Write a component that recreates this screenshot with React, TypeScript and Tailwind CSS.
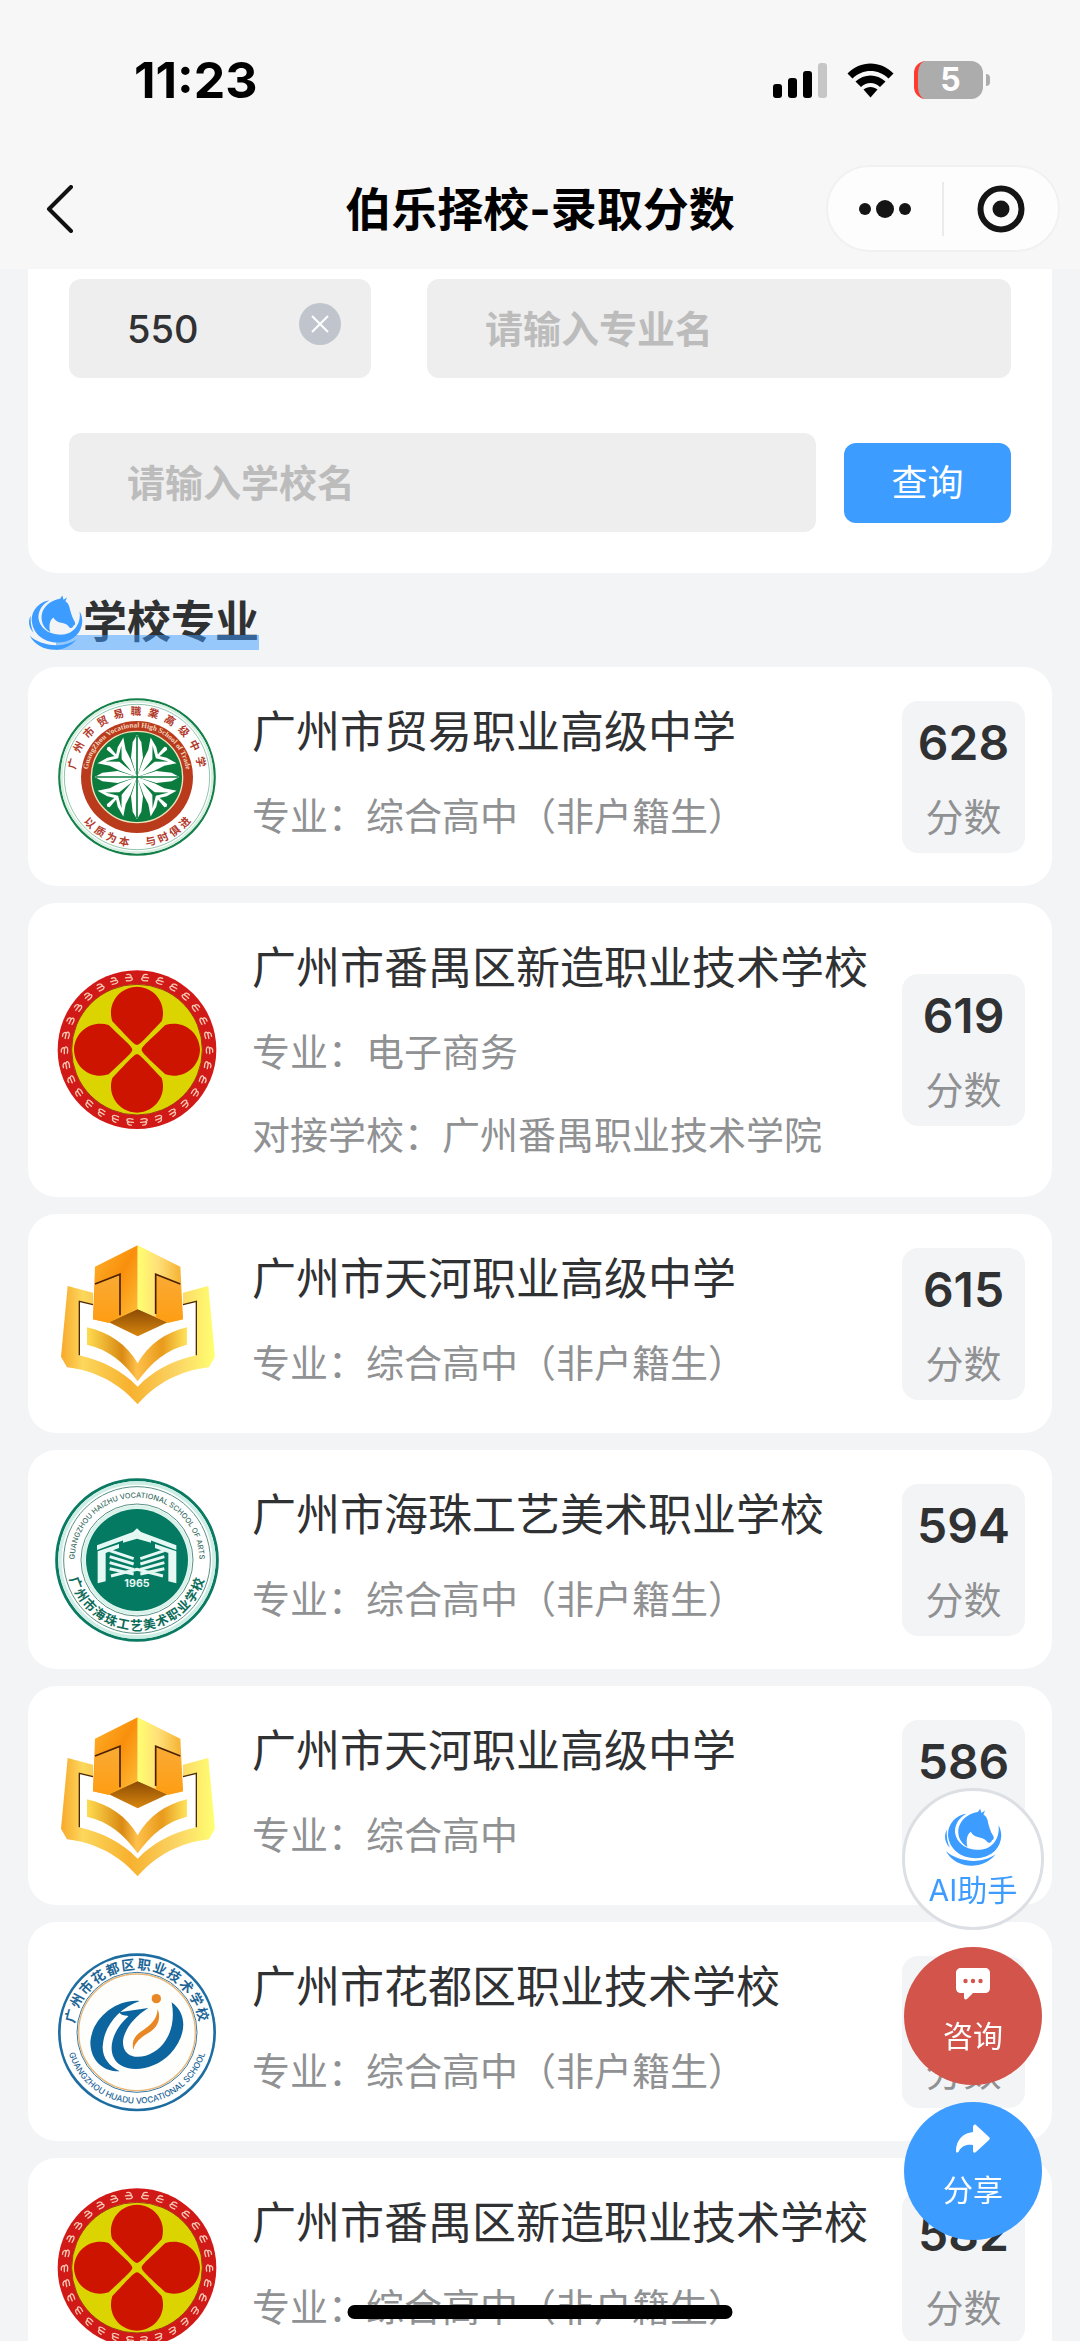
import { useState } from 'react';
import type { ReactNode } from 'react';

type LogoName = 'trade' | 'panyu' | 'tianhe' | 'haizhu' | 'huadu';

interface School {
  name: string;
  major: string;
  partner?: string;
  score: number;
  logo: LogoName;
}

const SCHOOLS: School[] = [
  { name: '广州市贸易职业高级中学', major: '综合高中（非户籍生）', score: 628, logo: 'trade' },
  {
    name: '广州市番禺区新造职业技术学校',
    major: '电子商务',
    partner: '广州番禺职业技术学院',
    score: 619,
    logo: 'panyu',
  },
  { name: '广州市天河职业高级中学', major: '综合高中（非户籍生）', score: 615, logo: 'tianhe' },
  { name: '广州市海珠工艺美术职业学校', major: '综合高中（非户籍生）', score: 594, logo: 'haizhu' },
  { name: '广州市天河职业高级中学', major: '综合高中', score: 586, logo: 'tianhe' },
  { name: '广州市花都区职业技术学校', major: '综合高中（非户籍生）', score: 584, logo: 'huadu' },
  { name: '广州市番禺区新造职业技术学校', major: '综合高中（非户籍生）', score: 582, logo: 'panyu' },
];

function HorseLogo({ className }: { className?: string }) {
  return (
    <svg viewBox="26 28 178 178" className={className} fill="#3c9cff" aria-hidden="true">
      <path d="M95 46C60 50 34 82 39 117C45 158 82 182 122 182C160 182 192 162 200 126C204 108 200 92 193 81C196 98 192 116 183 130C170 150 148 158 124 156C92 154 64 134 60 104C58 80 72 58 95 46Z" />
      <path d="M137 30L130 40C100 44 74 66 70 94C68 118 78 136 98 148C93 128 96 110 108 101C114 112 126 118 138 119C150 121 154 126 160 133C166 137 172 134 173 127C180 126 180 118 176 112C168 100 166 88 162 76C160 62 156 54 147 48L152 36L141 43Z" />
      <path d="M35 95C25 112 28 134 44 150C36 132 33 114 35 95Z" />
      <path d="M32 160C60 188 132 206 184 171C140 224 58 212 32 160Z" />
    </svg>
  );
}

function TradeLogo() {
  return (
    <svg viewBox="1 13 492 492" className="size-full" aria-hidden="true">
      <defs>
        <path id="trade-top" d="M62 259A185 185 0 0 1 432 259" />
        <path id="trade-ring" d="M98 259A149 149 0 0 1 396 259" />
        <path id="trade-bottom" d="M38 259A209 209 0 0 0 456 259" />
      </defs>
      <circle cx="247" cy="259" r="233" fill="#fff" stroke="#15804a" strokeWidth="7" />
      <circle cx="247" cy="259" r="226" fill="none" stroke="#d5efe0" strokeWidth="7" />
      <circle cx="247" cy="259" r="218" fill="none" stroke="#5da882" strokeWidth="2" />
      <circle cx="247" cy="259" r="168" fill="#b93b1c" />
      <circle cx="247" cy="259" r="137" fill="#0b7c3e" stroke="#f0e3bd" strokeWidth="4" />
      <g transform="translate(247 259)">
        {[0, 90, 180, 270].map((a) => (
          <g key={a} transform={`rotate(${a})`}>
            <path d="M0 0L-18 -58L-13 -104L0 -127L13 -104L18 -58Z" fill="#fff" />
            <g transform="rotate(45)">
              <path d="M0 0L-24 -52L-34 -82L-55 -113L-22 -104L0 -90L22 -104L55 -113L34 -82L24 -52Z" fill="#fff" />
              <path d="M-6 -122L0 -126L6 -122L3 -86H-3Z" fill="#fff" />
              <path d="M0 -22L-5 -70L-34 -100L0 -80L34 -100L5 -70Z" fill="#0b7c3e" />
            </g>
            <path d="M0 0V-124" stroke="#0b7c3e" strokeWidth="5" />
          </g>
        ))}
      </g>
      <g fill="#b23a2b" fontFamily='"Noto Sans CJK SC", sans-serif' fontWeight="700" fontSize="32" textAnchor="middle">
        <text letterSpacing="18">
          <textPath href="#trade-top" startOffset="51%">广州市贸易職業高级中学</textPath>
        </text>
        <text letterSpacing="10">
          <textPath href="#trade-bottom" startOffset="51%">以质为本　与时俱进</textPath>
        </text>
      </g>
      <text fill="#f3d9c0" fontFamily='"Liberation Serif", serif' fontWeight="700" fontSize="22" textAnchor="middle">
        <textPath href="#trade-ring" startOffset="50%">GuangZhou Vocational High School of Trade</textPath>
      </text>
    </svg>
  );
}

function PanyuLogo() {
  const marks = Array.from({ length: 30 }, (_, i) => i * 12 + 6);
  return (
    <svg viewBox="44 54 492 492" className="size-full" aria-hidden="true">
      <circle cx="290" cy="299" r="238" fill="#d11a17" />
      <circle cx="290" cy="299" r="196" fill="#dcd400" stroke="#a8341a" strokeWidth="3" />
      {[0, 90, 180, 270].map((a) => (
        <path
          key={a}
          transform={`rotate(${a} 290 299)`}
          d="M290 285C280 284 268 268 216 214C200 166 232 112 290 110C348 112 380 166 364 214C312 268 300 284 290 285Z"
          fill="#cc1400"
        />
      ))}
      <g fill="none" stroke="#f7c9b4" strokeWidth="4" strokeLinecap="round">
        {marks.map((a) => (
          <path
            key={a}
            transform={`rotate(${a} 290 299)`}
            d={a < 180 ? 'M297 72C286 70 282 78 286 82C278 84 280 94 300 90M286 81H302' : 'M283 72C294 70 298 78 294 82C302 84 300 94 280 90M294 81H278'}
          />
        ))}
      </g>
    </svg>
  );
}

function TianheLogo() {
  return (
    <svg viewBox="46 34 492 492" className="size-full" aria-hidden="true">
      <defs>
        <linearGradient id="th-left" x1="0" y1="0" x2="1" y2="1">
          <stop offset="0" stopColor="#ffb52e" />
          <stop offset="0.5" stopColor="#f98f0c" />
          <stop offset="1" stopColor="#ffc23a" />
        </linearGradient>
        <linearGradient id="th-right" x1="0" y1="0" x2="1" y2="0">
          <stop offset="0" stopColor="#ffff6e" />
          <stop offset="0.45" stopColor="#ffe079" />
          <stop offset="1" stopColor="#f5ae2c" />
        </linearGradient>
        <linearGradient id="th-face" x1="0" y1="0" x2="0" y2="1">
          <stop offset="0" stopColor="#f9ab35" />
          <stop offset="1" stopColor="#ff9d13" />
        </linearGradient>
        <linearGradient id="th-base" x1="0" y1="0" x2="0" y2="1">
          <stop offset="0" stopColor="#8a4a05" />
          <stop offset="1" stopColor="#d8860d" />
        </linearGradient>
        <linearGradient id="th-book" x1="0" y1="0" x2="1" y2="0">
          <stop offset="0" stopColor="#f8a92b" />
          <stop offset="0.14" stopColor="#fcd75c" />
          <stop offset="0.45" stopColor="#f7b12f" />
          <stop offset="0.75" stopColor="#fbd464" />
          <stop offset="1" stopColor="#ffff72" />
        </linearGradient>
        <linearGradient id="th-page" x1="0" y1="0" x2="1" y2="0">
          <stop offset="0" stopColor="#ffdc50" />
          <stop offset="0.35" stopColor="#d98a14" />
          <stop offset="0.5" stopColor="#ffc14a" />
          <stop offset="0.75" stopColor="#e89a1c" />
          <stop offset="1" stopColor="#ffe45c" />
        </linearGradient>
      </defs>
      <path
        d="M84 166L160 186V222L118 212V374C190 390 246 420 294 468C342 420 396 390 470 374V212L430 222V186L506 166L526 378L508 410C420 420 350 458 294 521C238 458 168 420 82 410L64 378Z"
        fill="url(#th-book)"
      />
      <path d="M160 222L119 212V374M430 222L470 212V374" fill="none" stroke="#4e2704" strokeWidth="4" />
      <path d="M142 290C210 306 262 342 294 398C326 342 376 306 442 290V342C382 356 334 396 294 452C254 396 206 356 142 342Z" fill="url(#th-page)" />
      <path d="M206 274L294 234L386 274L294 317Z" fill="url(#th-base)" />
      <path d="M294 44L166 108L160 266L206 276L294 236Z" fill="url(#th-left)" />
      <path d="M294 44L422 108L430 266L386 276L294 236Z" fill="url(#th-right)" />
      <path d="M166 160L241 131V254L206 276L160 266Z" fill="url(#th-face)" />
      <path d="M422 160L348 131V260L386 276L430 266Z" fill="url(#th-face)" />
      <path d="M166 160L241 131V254M422 160L348 131V250" fill="none" stroke="#4a2202" strokeWidth="5" />
    </svg>
  );
}

function HaizhuLogo() {
  return (
    <svg viewBox="46 52 492 492" className="size-full" aria-hidden="true">
      <defs>
        <path id="hz-top" d="M105 298A187 187 0 0 1 479 298" />
        <path id="hz-bottom" d="M82 298A210 210 0 0 0 502 298" />
      </defs>
      <circle cx="292" cy="298" r="241" fill="#fff" stroke="#0b7a63" strokeWidth="9" />
      <circle cx="292" cy="298" r="231" fill="none" stroke="#cdeee4" strokeWidth="10" />
      <circle cx="292" cy="298" r="220" fill="none" stroke="#5a8f84" strokeWidth="3" />
      <circle cx="292" cy="298" r="168" fill="none" stroke="#5a8f84" strokeWidth="3" />
      <circle cx="292" cy="298" r="159" fill="none" stroke="#d9f3eb" strokeWidth="10" />
      <circle cx="292" cy="298" r="153" fill="#047a63" />
      <g fill="#e6f8f3">
        <path d="M172 254L280 214L292 203L304 214L410 254V268L292 224L172 268Z" />
        <path d="M250 236L292 222L334 236V246L292 234L250 246Z" />
        <path d="M174 272L238 250V262L198 277V362L174 368Z" />
        <path d="M410 272L346 250V262L386 277V362L410 368Z" />
      </g>
      <g fill="none" stroke="#e6f8f3" strokeWidth="9">
        <path d="M210 270L282 294M210 288L282 310M210 306L282 326M210 324L282 340" />
        <path d="M374 270L302 294M374 288L302 310M374 306L302 326M374 324L302 340" />
        <path d="M214 346L292 326L370 346" />
      </g>
      <text x="292" y="379" fill="#e6f8f3" fontFamily="Inter, sans-serif" fontWeight="700" fontSize="32" textAnchor="middle">
        1965
      </text>
      <g fill="#3d6f66" textAnchor="middle">
        <text fontFamily="Inter, sans-serif" fontWeight="500" fontSize="22">
          <textPath href="#hz-top" startOffset="50%">GUANGZHOU HAIZHU VOCATIONAL SCHOOL OF ARTS</textPath>
        </text>
        <text fill="#0b6b58" fontFamily='"Noto Sans CJK SC", sans-serif' fontWeight="700" fontSize="38" letterSpacing="4">
          <textPath href="#hz-bottom" startOffset="50%">广州市海珠工艺美术职业学校</textPath>
        </text>
      </g>
    </svg>
  );
}

function HuaduLogo() {
  return (
    <svg viewBox="46 59 492 492" className="size-full" aria-hidden="true">
      <defs>
        <path id="hd-top" d="M103 306A189 189 0 0 1 481 306" />
        <path id="hd-bottom" d="M78 306A214 214 0 0 0 506 306" />
      </defs>
      <circle cx="292" cy="306" r="233" fill="#fff" stroke="#1d6da1" strokeWidth="8" />
      <circle cx="292" cy="306" r="180" fill="#fff" stroke="#3878a4" strokeWidth="3" />
      <circle cx="292" cy="306" r="175" fill="#fefefc" stroke="#e8b777" strokeWidth="4" />
      <path
        d="M300 212C228 206 158 264 152 334C152 392 192 424 240 423C206 408 184 376 190 340C196 284 240 232 300 212Z"
        fill="#0c659f"
      />
      <path
        d="M238 246L326 233C284 258 254 298 250 332C248 374 282 386 318 376C372 360 412 300 396 216C446 252 440 318 392 370C350 414 282 428 242 404C198 374 212 306 266 258C258 254 248 258 238 246Z"
        fill="#0c659f"
      />
      <path d="M354 236C366 268 352 292 326 308C302 322 286 336 281 358C274 328 290 312 312 298C338 280 352 264 354 236Z" fill="#e88724" />
      <circle cx="350" cy="205" r="14" fill="#e88724" />
      <g fill="#1d6596" textAnchor="middle">
        <text fontFamily='"Noto Sans CJK SC", sans-serif' fontWeight="700" fontSize="40" letterSpacing="5">
          <textPath href="#hd-top" startOffset="50%">广州市花都区职业技术学校</textPath>
        </text>
        <text fontFamily="Inter, sans-serif" fontWeight="500" fontSize="25">
          <textPath href="#hd-bottom" startOffset="50%">GUANGZHOU HUADU VOCATIONAL SCHOOL</textPath>
        </text>
      </g>
    </svg>
  );
}

const LOGOS: Record<LogoName, () => ReactNode> = {
  trade: TradeLogo,
  panyu: PanyuLogo,
  tianhe: TianheLogo,
  haizhu: HaizhuLogo,
  huadu: HuaduLogo,
};

function StatusBar() {
  return (
    <div className="flex h-[160px] items-center justify-between pr-[90px] pl-[134px] text-black">
      <span className="text-[50px] font-bold">11:23</span>
      <div className="flex items-center gap-5">
        <svg viewBox="0 0 54 35" className="h-[35px] w-[54px]" aria-hidden="true">
          <rect x="0" y="21" width="9" height="14" rx="3" />
          <rect x="15" y="15" width="9" height="20" rx="3" />
          <rect x="30" y="8" width="9" height="27" rx="3" />
          <rect x="45" y="0" width="9" height="35" rx="3" fill="#c6c6c6" />
        </svg>
        <svg viewBox="0 0 47 35" className="h-[35px] w-[47px]" aria-hidden="true">
          <path d="M0.500 10.500C13 -3 34 -3 46.500 10.500L41.500 15.500C31.500 5.500 15.500 5.500 5.500 15.500Z" />
          <path d="M8.500 18.500C17 10.500 30 10.500 38.500 18.500L33 24C27.500 18.500 19.500 18.500 14 24Z" />
          <path d="M16.500 26.500C20.500 23 26.500 23 30.500 26.500L23.500 34.500Z" />
        </svg>
        <div className="flex items-center gap-[3px]">
          <div className="flex h-[38px] w-[69px] items-center justify-center overflow-hidden rounded-xl border-l-4 border-[#ff3b30] bg-[#acacac] text-[32px] leading-none font-bold text-white">
            5
          </div>
          <div className="h-3 w-1 rounded-r-full bg-[#acacac]" />
        </div>
      </div>
    </div>
  );
}

function NavBar() {
  return (
    <div className="grid h-[109px] grid-cols-[1fr_auto_1fr] items-center pr-5 pb-3 pl-10">
      <button type="button" aria-label="返回" className="justify-self-start">
        <svg viewBox="0 0 40 48" className="h-12 w-10" fill="none" stroke="#111" strokeWidth="4" aria-hidden="true">
          <path d="M31 2L9 24L31 46" strokeLinecap="round" strokeLinejoin="round" />
        </svg>
      </button>
      <h1 className="-ml-5 text-[46px] leading-none font-bold text-black">伯乐择校-录取分数</h1>
      <div className="flex h-[87px] w-[234px] items-center justify-self-end rounded-full border-2 border-[#f1f1f1] bg-[#fdfdfd]">
        <button type="button" aria-label="更多" className="flex h-full flex-1 items-center justify-center">
          <svg viewBox="0 0 52 18" className="h-[18px] w-[52px]" fill="#151515" aria-hidden="true">
            <circle cx="6" cy="9" r="6" />
            <circle cx="26" cy="9" r="9" />
            <circle cx="46" cy="9" r="6" />
          </svg>
        </button>
        <div className="h-[54px] w-[2px] bg-[#ebebeb]" />
        <button type="button" aria-label="关闭" className="flex h-full flex-1 items-center justify-center">
          <svg viewBox="0 0 48 48" className="size-12" aria-hidden="true">
            <circle cx="24" cy="24" r="20.500" fill="none" stroke="#151515" strokeWidth="6" />
            <circle cx="24" cy="24" r="8.500" fill="#151515" />
          </svg>
        </button>
      </div>
    </div>
  );
}

const inputClass =
  'h-[99px] w-full rounded-xl bg-[#eeeeee] px-[58px] text-[38px] font-medium text-[#303133] placeholder:font-bold placeholder:text-[#bcbcbc] outline-none';

function SearchForm() {
  const [score, setScore] = useState('550');
  return (
    <form
      className="rounded-b-[28px] bg-white px-[41px] pt-[10px] pb-[41px]"
      onSubmit={(e) => e.preventDefault()}
    >
      <div className="flex gap-14">
        <div className="relative w-[302px] shrink-0">
          <input aria-label="分数" className={inputClass} value={score} onChange={(e) => setScore(e.target.value)} />
          <button
            type="button"
            aria-label="清除"
            onClick={() => setScore('')}
            className="absolute top-6 right-[30px] flex size-[42px] items-center justify-center rounded-full bg-[#c0c4cc]"
          >
            <svg viewBox="0 0 18 18" className="size-[18px]" stroke="#fff" strokeWidth="2" aria-hidden="true">
              <path d="M1 1L17 17M17 1L1 17" />
            </svg>
          </button>
        </div>
        <input aria-label="专业名" className={inputClass} placeholder="请输入专业名" />
      </div>
      <div className="mt-[55px] flex items-center gap-7">
        <input aria-label="学校名" className={inputClass} placeholder="请输入学校名" />
        <button type="submit" className="h-20 w-[167px] shrink-0 rounded-xl bg-[#3c9cff] text-[36px] text-white">
          查询
        </button>
      </div>
    </form>
  );
}

function SchoolCard({ school }: { school: School }) {
  const Logo = LOGOS[school.logo];
  return (
    <li className="flex min-h-[219px] shrink-0 items-center rounded-[28px] bg-white py-[21px] pr-[27px] pl-[27px]">
      <div className="size-[164px] shrink-0">
        <Logo />
      </div>
      <div className="ml-[33px] min-w-0 flex-1 self-start pt-[2px] whitespace-nowrap">
        <h3 className="text-[44px] leading-[84px] text-[#303133]">{school.name}</h3>
        <p className="text-[38px] leading-[84px] text-[#909193]">专业：{school.major}</p>
        {school.partner && (
          <p className="text-[38px] leading-[82px] text-[#909193]">对接学校：{school.partner}</p>
        )}
      </div>
      <div className="w-[123px] shrink-0 rounded-2xl bg-[#f3f4f6] pt-1 text-center">
        <div className="text-[48px] leading-[76px] font-semibold text-[#303133]">{school.score}</div>
        <div className="text-[38px] leading-[72px] text-[#909193]">分数</div>
      </div>
    </li>
  );
}

function FloatingActions() {
  return (
    <div className="fixed right-9 bottom-[101px] flex flex-col items-center gap-[17px] text-[30px] leading-10">
      <button
        type="button"
        className="flex size-[142px] flex-col items-center justify-center gap-1 rounded-full border-[3px] border-[#dcdfe3] bg-white text-[#3c9cff]"
      >
        <HorseLogo className="size-[58px]" />
        AI助手
      </button>
      <button
        type="button"
        className="flex size-[138px] flex-col items-center justify-center gap-4 rounded-full bg-[#d3544b] pb-2 text-white"
      >
        <svg viewBox="0 0 34 32" className="h-8 w-[34px]" aria-hidden="true">
          <path
            d="M5 0H29C32 0 34 2 34 5V20C34 23 32 25 29 25H17L11 31C9 32 8 31 8 29V25H5C2 25 0 23 0 20V5C0 2 2 0 5 0Z"
            fill="#fff"
          />
          <g fill="#d3544b">
            <circle cx="9.500" cy="13" r="2.200" />
            <circle cx="17" cy="13" r="2.200" />
            <circle cx="24.500" cy="13" r="2.200" />
          </g>
        </svg>
        咨询
      </button>
      <button
        type="button"
        className="flex size-[138px] flex-col items-center justify-center gap-4 rounded-full bg-[#3c9cff] pb-2 text-white"
      >
        <svg viewBox="0 0 34 30" className="h-[30px] w-[34px]" fill="#fff" aria-hidden="true">
          <path d="M17 3C17 1 19 0 20 1L33 13C34 14 34 15 33 16L20 28C19 29 17 29 17 27V21C10 20 6 22 3 27C2 29 0 29 0 27C0 16 7 9 17 8Z" />
        </svg>
        分享
      </button>
    </div>
  );
}

export default function App() {
  return (
    <div className="flex h-screen flex-col overflow-hidden bg-[#f3f4f6] font-[Inter,'Noto_Sans_CJK_SC',sans-serif]">
      <header className="shrink-0 bg-[#f7f7f7]">
        <StatusBar />
        <NavBar />
      </header>
      <main className="min-h-0 flex-1 overflow-hidden px-7">
        <SearchForm />
        <div className="mt-[21px] mb-[17px] flex">
          <h2 className="relative flex h-14 items-center text-[44px] leading-none font-bold text-[#303133]">
            <HorseLogo className="relative z-10 size-[55px] shrink-0" />
            学校专业
            <span className="absolute right-0 bottom-0 left-7 h-[15px] bg-[#3c9cff]/50" />
          </h2>
        </div>
        <ul className="flex flex-col gap-[17px]">
          {SCHOOLS.map((s, i) => (
            <SchoolCard key={i} school={s} />
          ))}
        </ul>
      </main>
      <FloatingActions />
      <div className="fixed bottom-[22px] left-1/2 h-[14px] w-[385px] -translate-x-1/2 rounded-full bg-black" />
    </div>
  );
}
